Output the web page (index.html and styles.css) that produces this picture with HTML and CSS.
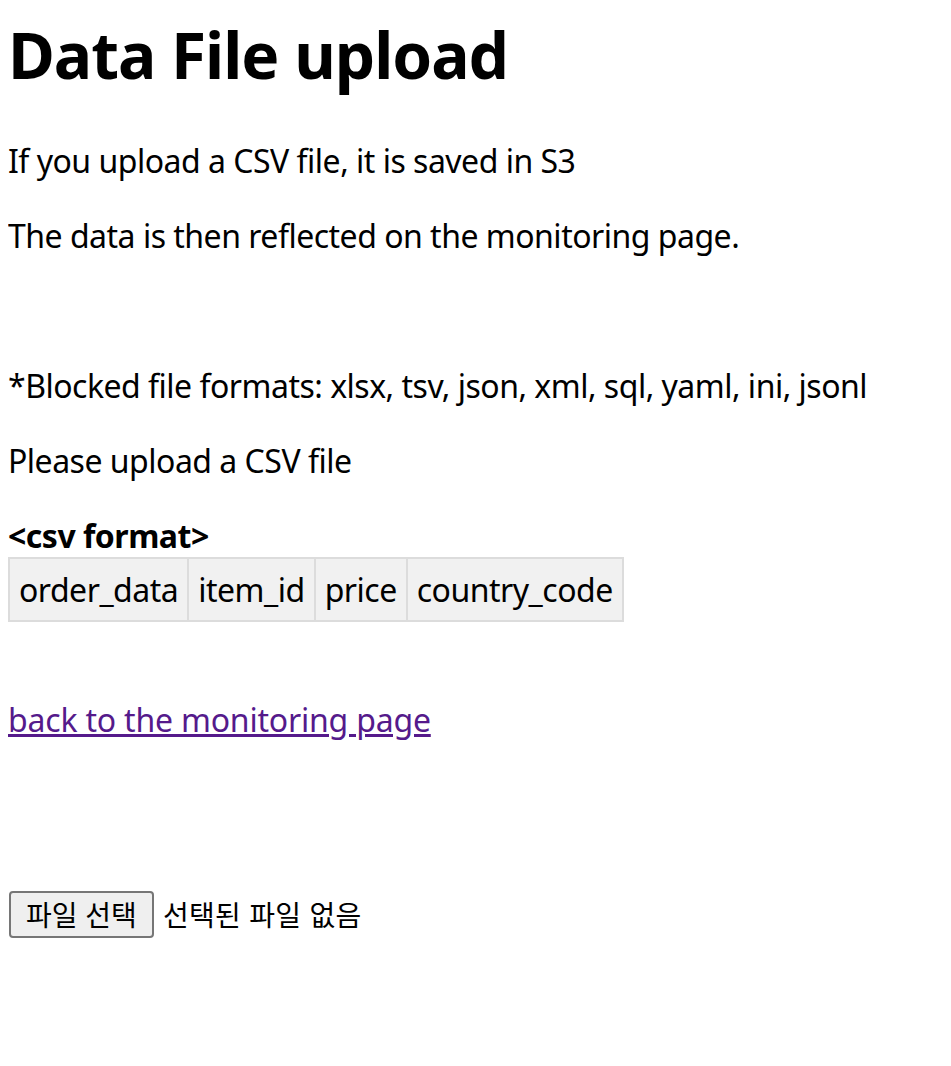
FILE: index.html
```html
<!DOCTYPE html>
<html lang="ko">
<head>
    <meta charset="UTF-8">
    <meta name="viewport" content="width=device-width, initial-scale=1.0">
    <title>Data File upload</title>
    <link rel="stylesheet" href="styles.css">
</head>
<body>
    <h1>Data File upload</h1>
    <p>If you upload a CSV file, it is saved in S3</p>
    <p>The data is then reflected on the monitoring page.</p>
    <p><br></p>
    <p>*Blocked file formats: xlsx, tsv, json, xml, sql, yaml, ini, jsonl</p>
    <p>Please upload a CSV file</p>

    <p class="format-title"><strong>&lt;csv format&gt;</strong></p>
    <table class="format-table">
        <tr>
            <td>order_data</td>
            <td>item_id</td>
            <td>price</td>
            <td>country_code</td>
        </tr>
    </table>

    <p class="back-link"><a href="#">back to the monitoring page</a></p>

    <form class="upload-form">
        <label class="file-button" for="file">파일 선택</label>
        <input type="file" id="file" accept=".csv">
        <span class="file-name">선택된 파일 없음</span>
    </form>
</body>
</html>
```

FILE: styles.css
```css
/* General Styling */
body {
    font-family: "Noto Sans", "Noto Sans CJK KR", sans-serif;
    font-size: 32px;
    line-height: 43px;
    letter-spacing: -0.5px;
    color: #000;
    background-color: #fff;
    margin: 12px 8px 8px;
}

h1 {
    font-size: 64px;
    line-height: 86px;
    font-weight: bold;
    letter-spacing: -1px;
    margin: 0 0 41px;
}

p {
    margin: 32px 0;
}

.format-title {
    margin-bottom: 0;
}

/* csv format table */
.format-table {
    border-collapse: collapse;
    background-color: #f1f1f1;
}

.format-table td {
    border: 2px solid #dcdcdc;
    padding: 9px 9px;
}

.back-link {
    margin-top: 76px;
}

.back-link a {
    color: #551a8b;
    letter-spacing: -0.2px;
}

/* file input */
.upload-form {
    display: flex;
    align-items: center;
    gap: 9px;
    margin-top: 150px;
    font-family: "Noto Sans CJK KR", sans-serif;
    font-size: 28px;
    letter-spacing: 0.3px;
}

.upload-form input {
    display: none;
}

.file-button {
    display: inline-block;
    background-color: #efefef;
    border: 2px solid #767676;
    border-radius: 4px;
    padding: 0 15px;
    line-height: 43px;
    margin-left: 1px;
    letter-spacing: 0;
}

.file-name {
    line-height: 43px;
}
```
